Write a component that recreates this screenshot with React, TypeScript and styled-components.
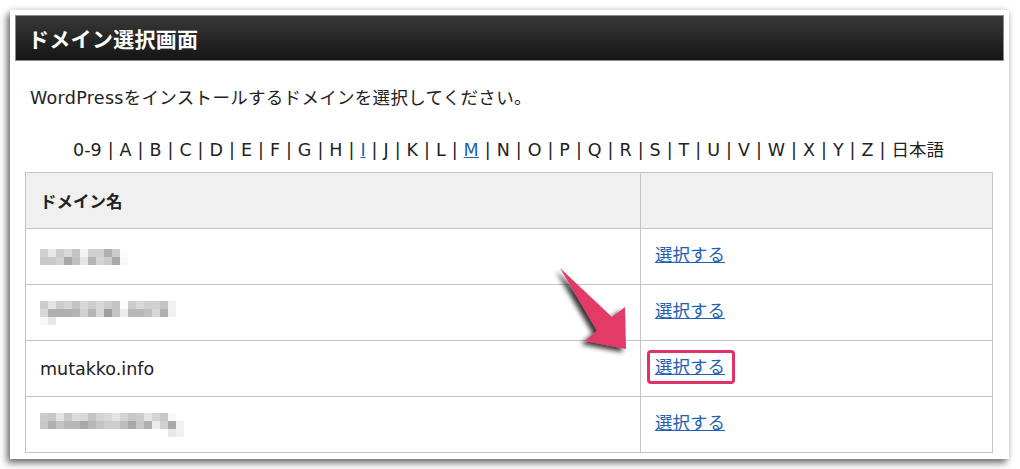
import React from 'react'
import styled, { createGlobalStyle } from 'styled-components'

const GlobalStyle = createGlobalStyle`
  html, body {
    margin: 0;
    padding: 0;
    background: #ffffff;
  }
  body {
    font-family: 'DejaVu Sans', 'Noto Sans CJK JP', sans-serif;
    color: #222;
  }
`

const Page = styled.div`
  width: 1020px;
  height: 469px;
  padding: 10px 11px 10px 10px;
  box-sizing: border-box;
  position: relative;
`

const Card = styled.div`
  background: #fff;
  height: 449px;
  box-sizing: border-box;
  padding: 5px;
  box-shadow: -3px 4px 7px rgba(0, 0, 0, 0.55), 0 0 6px rgba(0, 0, 0, 0.15);
  display: flex;
  flex-direction: column;
`

const TitleBar = styled.div`
  height: 46px;
  box-sizing: border-box;
  border: 1px solid #8a8a8a;
  background: linear-gradient(#383838, #151515);
  display: flex;
  align-items: center;
  padding: 0 12px;
`

const Title = styled.h1`
  margin: 0;
  color: #fff;
  font-size: 21px;
  font-weight: bold;
  font-family: 'Noto Sans CJK JP', sans-serif;
  letter-spacing: 0.3px;
`

const Body = styled.div`
  padding: 0 12px 0 10px;
  display: flex;
  flex-direction: column;
`

const Lead = styled.p`
  margin: 26px 0 0 5px;
  font-size: 17.5px;
  line-height: 22px;
  letter-spacing: 0.3px;
`

const AlphaNav = styled.div`
  margin-top: 30px;
  text-align: center;
  font-size: 17.5px;
  line-height: 22px;
`

const Sep = styled.span`
  margin: 0 6px;
`

const Link = styled.a`
  color: #2160b2;
  text-decoration: underline;
  cursor: pointer;
`

const Table = styled.table`
  margin-top: 11px;
  width: 968px;
  border-collapse: collapse;
  border: 1px solid #c4c4c4;
  font-size: 17.5px;
`

const HeadCell = styled.th`
  height: 56px;
  box-sizing: border-box;
  background: #f0f0f0;
  border: 1px solid #c4c4c4;
  text-align: left;
  padding: 0 14px;
  font-weight: bold;
  font-family: 'Noto Sans CJK JP', sans-serif;
  font-size: 16.5px;
`

const Cell = styled.td<{ $wide?: boolean }>`
  height: 56px;
  box-sizing: border-box;
  border: 1px solid #c4c4c4;
  padding: 0 14px;
  width: ${(p) => (p.$wide ? '615px' : 'auto')};
`

const ActionLink = styled(Link)<{ $marked?: boolean }>`
  display: inline-block;
  padding: 3px 7px 3px 5px;
  margin-left: -8px;
  margin-top: -3px;
  border-radius: 4px;
  border: 3px solid ${(p) => (p.$marked ? '#df3366' : 'transparent')};
  line-height: 22px;
`

const MosaicGrid = styled.div`
  display: flex;
  flex-direction: column;
`

const MosaicRow = styled.div`
  display: flex;
`

const Tile = styled.span`
  width: 8px;
  height: 8px;
  display: block;
`

const Arrow = styled.svg`
  position: absolute;
  left: 540px;
  top: 255px;
  width: 100px;
  height: 110px;
  overflow: visible;
`

type MosaicProps = { rows: string[] }

const Mosaic = ({ rows }: MosaicProps) => (
  <MosaicGrid>
    {rows.map((r, i) => (
      <MosaicRow key={i}>
        {r.split(' ').map((v, j) => (
          <Tile key={j} style={{ background: v === '--' ? 'transparent' : `#${v}${v}${v}` }} />
        ))}
      </MosaicRow>
    ))}
  </MosaicGrid>
)

const letters = ['0-9', ...'ABCDEFGHIJKLMNOPQRSTUVWXYZ'.split(''), '日本語']
const linked = ['I', 'M']

const blurred: string[][] = [
  [
    'd0 e8 cc d8 c4 f4 d0 d0 b0 cc fc',
    'c8 c8 d0 a8 c0 e4 b4 d4 cc a8 f8',
  ],
  [
    'cc e4 cc d4 c4 d8 cc d8 cc c4 fc cc d8 d0 d0 c4 f0',
    'd8 b0 b0 b0 b4 d0 b4 d8 a0 c4 ec b8 b8 c0 d8 b0 f0',
    'f8 e8 -- -- -- -- -- -- -- -- -- -- -- -- -- -- --',
  ],
  [],
  [
    'cc c8 e4 c8 dc d8 c4 d4 d8 e4 d4 c8 cc e4 d4 c8 f8 --',
    'c8 b0 c4 b8 b8 a8 b8 c4 cc cc bc a8 c8 b0 ec d0 a8 f0',
    '-- -- -- -- -- -- -- -- -- -- -- -- -- -- -- -- e8 f0',
  ],
]

export default function App() {
  return (
    <>
      <GlobalStyle />
      <Page>
        <Card>
          <TitleBar>
            <Title>ドメイン選択画面</Title>
          </TitleBar>
          <Body>
            <Lead>WordPressをインストールするドメインを選択してください。</Lead>
            <AlphaNav>
              {letters.map((l, i) => (
                <React.Fragment key={l}>
                  {linked.includes(l) ? <Link>{l}</Link> : l}
                  {i < letters.length - 1 && <Sep>|</Sep>}
                </React.Fragment>
              ))}
            </AlphaNav>
            <Table>
              <thead>
                <tr>
                  <HeadCell>ドメイン名</HeadCell>
                  <HeadCell />
                </tr>
              </thead>
              <tbody>
                {blurred.map((rows, i) => (
                  <tr key={i}>
                    <Cell $wide>{rows.length ? <Mosaic rows={rows} /> : 'mutakko.info'}</Cell>
                    <Cell>
                      <ActionLink $marked={i === 2}>選択する</ActionLink>
                    </Cell>
                  </tr>
                ))}
              </tbody>
            </Table>
          </Body>
        </Card>
        <Arrow viewBox="540 255 100 110">
          <defs>
            <filter id="sh" x="-30%" y="-30%" width="160%" height="160%">
              <feGaussianBlur in="SourceAlpha" stdDeviation="2.5" />
              <feOffset dx="-4" dy="3" result="b" />
              <feComponentTransfer>
                <feFuncA type="linear" slope="0.8" />
              </feComponentTransfer>
              <feMerge>
                <feMergeNode />
                <feMergeNode in="SourceGraphic" />
              </feMerge>
            </filter>
          </defs>
          <polygon
            points="560,268 612,317 625,307 626,349 585,341 597,331"
            fill="#e23a68"
            filter="url(#sh)"
          />
        </Arrow>
      </Page>
    </>
  )
}
